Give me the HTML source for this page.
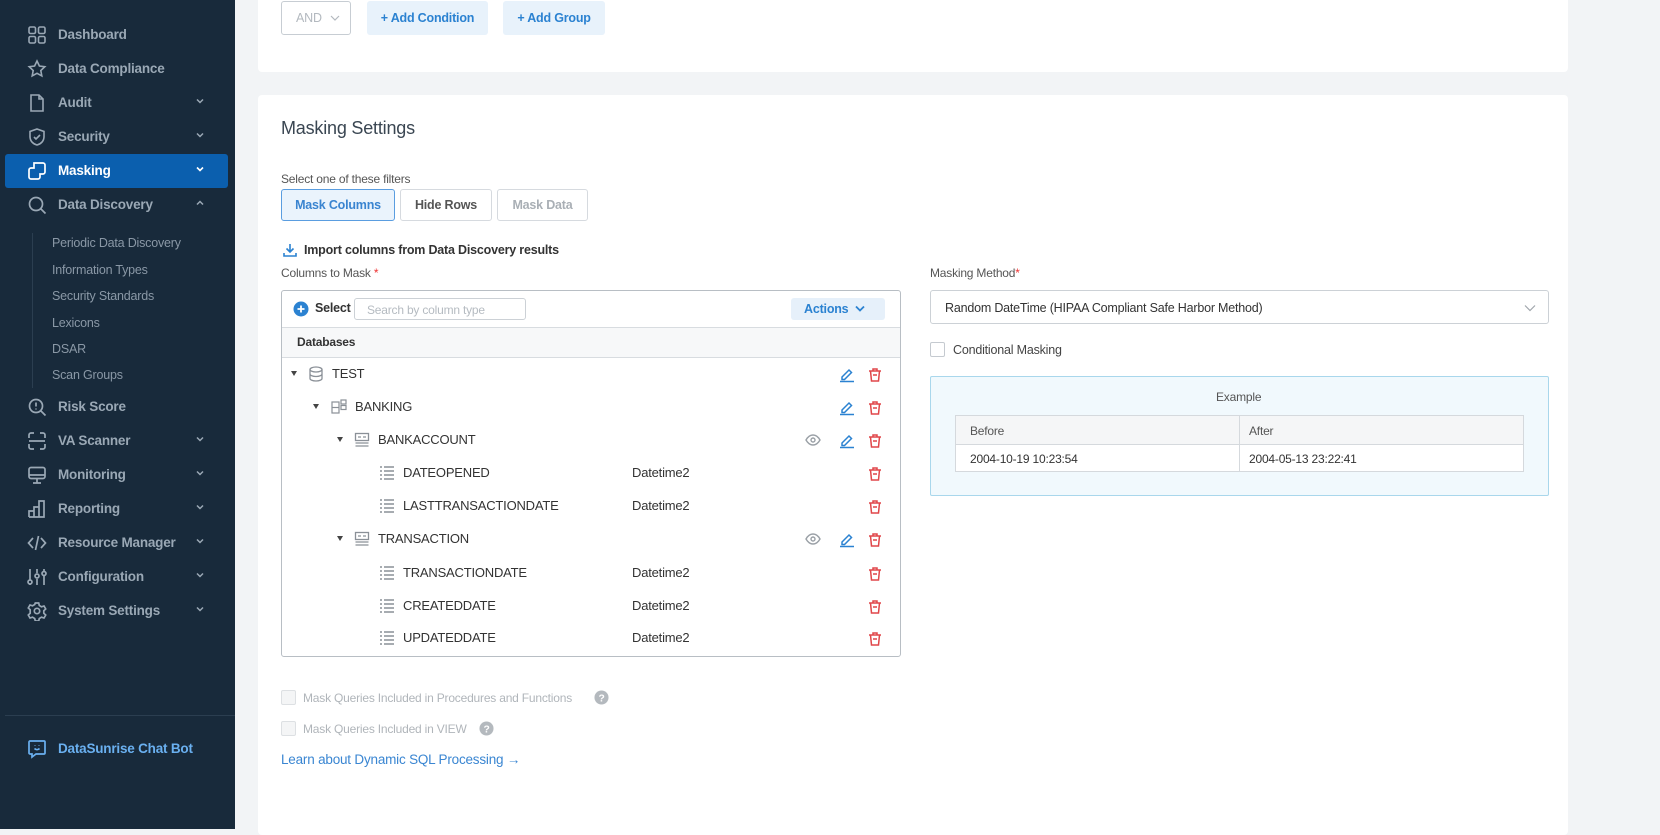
<!DOCTYPE html>
<html><head><meta charset="utf-8"><style>
*{box-sizing:border-box;margin:0;padding:0}
body{width:1660px;height:829px;overflow:hidden;background:#f2f4f6;font-family:"Liberation Sans",sans-serif;font-size:12.5px;letter-spacing:-0.2px;color:#333;position:relative}
.sb{position:absolute;left:0;top:0;width:235px;height:829px;background:#182a3b}
.it{position:absolute;left:0;width:235px;height:34px;color:#9aa8b5;font-weight:bold;font-size:13.5px}
.it .ic{position:absolute;left:27px;top:7px;width:20px;height:20px}
.it .t{position:absolute;left:58px;top:9px}
.it .ch{position:absolute;left:196px;top:11px;width:8px;height:8px}
.it.act{left:5px;width:223px;background:#0b5fae;border-radius:3px;color:#fff}
.it.act .ic{left:22px}.it.act .t{left:53px}.it.act .ch{left:191px}
.sub{position:absolute;left:52px;color:#8a98a6;font-size:12.5px}
.card{position:absolute;background:#fff;border-radius:4px}
.btn{position:absolute;border-radius:3px;font-weight:bold;font-size:12.5px;text-align:center}
.lbl{position:absolute;color:#555;font-size:12px}
.row{position:absolute;left:281px;width:619px;height:33px;font-size:13px;color:#333}
.row span{position:absolute;top:8px}
.tri{position:absolute;top:13px;width:0;height:0;border-left:3.5px solid transparent;border-right:3.5px solid transparent;border-top:5px solid #444}
.ri{position:absolute;top:8px;width:16px;height:16px}
</style></head><body>
<div class="sb">
 <div class="it" style="top:18px"><svg class="ic" viewBox="0 0 20 20" fill="none" stroke="#9aa8b5" stroke-width="1.6"><rect x="2" y="2" width="6.5" height="6.5" rx="1.5"/><rect x="11.5" y="2" width="6.5" height="6.5" rx="1.5"/><rect x="2" y="11.5" width="6.5" height="6.5" rx="1.5"/><rect x="11.5" y="11.5" width="6.5" height="6.5" rx="1.5"/></svg><span class="t">Dashboard</span></div>
 <div class="it" style="top:52px"><svg class="ic" viewBox="0 0 20 20" fill="none" stroke="#9aa8b5" stroke-width="1.6"><path d="M10 2l2.4 5 5.4.7-4 3.8 1 5.4L10 14.3 5.2 16.9l1-5.4-4-3.8 5.4-.7z"/></svg><span class="t">Data Compliance</span></div>
 <div class="it" style="top:86px"><svg class="ic" viewBox="0 0 20 20" fill="none" stroke="#9aa8b5" stroke-width="1.6"><path d="M4 2h8l4 4v12H4z"/><path d="M12 2v4h4"/></svg><span class="t">Audit</span><svg class="ch" viewBox="0 0 8 8"><path d="M1 2.5l3 3 3-3" stroke="#9aa8b5" stroke-width="1.5" fill="none"/></svg></div>
 <div class="it" style="top:120px"><svg class="ic" viewBox="0 0 20 20" fill="none" stroke="#9aa8b5" stroke-width="1.6"><path d="M10 2l7 2.5v5c0 4.5-3 7.5-7 8.5-4-1-7-4-7-8.5v-5z"/><path d="M7 10l2 2 4-4"/></svg><span class="t">Security</span><svg class="ch" viewBox="0 0 8 8"><path d="M1 2.5l3 3 3-3" stroke="#9aa8b5" stroke-width="1.5" fill="none"/></svg></div>
 <div class="it act" style="top:154px"><svg class="ic" viewBox="0 0 20 20" fill="none" stroke="#fff" stroke-width="1.7"><path d="M7 2h9a2 2 0 012 2v7a2 2 0 01-2 2h-3v3a2 2 0 01-2 2H4a2 2 0 01-2-2V9a2 2 0 012-2h3z"/></svg><span class="t">Masking</span><svg class="ch" viewBox="0 0 8 8"><path d="M1 2.5l3 3 3-3" stroke="#fff" stroke-width="1.6" fill="none"/></svg></div>
 <div class="it" style="top:188px"><svg class="ic" viewBox="0 0 20 20" fill="none" stroke="#9aa8b5" stroke-width="1.7"><circle cx="9" cy="9" r="6.5"/><path d="M14 14l4.5 4.5"/></svg><span class="t">Data Discovery</span><svg class="ch" viewBox="0 0 8 8"><path d="M1 5.5l3-3 3 3" stroke="#9aa8b5" stroke-width="1.5" fill="none"/></svg></div>
 <div style="position:absolute;left:32px;top:233px;width:1px;height:155px;background:#2b3e50"></div>
 <div class="sub" style="top:236px">Periodic Data Discovery</div>
 <div class="sub" style="top:263px">Information Types</div>
 <div class="sub" style="top:289px">Security Standards</div>
 <div class="sub" style="top:316px">Lexicons</div>
 <div class="sub" style="top:342px">DSAR</div>
 <div class="sub" style="top:368px">Scan Groups</div>
 <div class="it" style="top:390px"><svg class="ic" viewBox="0 0 20 20" fill="none" stroke="#9aa8b5" stroke-width="1.7"><circle cx="9" cy="9" r="6.5"/><path d="M14 14l4.5 4.5M9 5.5v4M9 11.5v1"/></svg><span class="t">Risk Score</span></div>
 <div class="it" style="top:424px"><svg class="ic" viewBox="0 0 20 20" fill="none" stroke="#9aa8b5" stroke-width="1.7"><path d="M2 7V4a2 2 0 012-2h3M13 2h3a2 2 0 012 2v3M18 13v3a2 2 0 01-2 2h-3M7 18H4a2 2 0 01-2-2v-3M2 10h16"/></svg><span class="t">VA Scanner</span><svg class="ch" viewBox="0 0 8 8"><path d="M1 2.5l3 3 3-3" stroke="#9aa8b5" stroke-width="1.5" fill="none"/></svg></div>
 <div class="it" style="top:458px"><svg class="ic" viewBox="0 0 20 20" fill="none" stroke="#9aa8b5" stroke-width="1.7"><rect x="2" y="2.5" width="16" height="11" rx="2"/><path d="M2 10h16M10 13.5v4M6 18h8"/></svg><span class="t">Monitoring</span><svg class="ch" viewBox="0 0 8 8"><path d="M1 2.5l3 3 3-3" stroke="#9aa8b5" stroke-width="1.5" fill="none"/></svg></div>
 <div class="it" style="top:492px"><svg class="ic" viewBox="0 0 20 20" fill="none" stroke="#9aa8b5" stroke-width="1.7"><path d="M2 18v-6h5v6M7 18V8h5v10M12 18V2h5v16H2"/></svg><span class="t">Reporting</span><svg class="ch" viewBox="0 0 8 8"><path d="M1 2.5l3 3 3-3" stroke="#9aa8b5" stroke-width="1.5" fill="none"/></svg></div>
 <div class="it" style="top:526px"><svg class="ic" viewBox="0 0 20 20" fill="none" stroke="#9aa8b5" stroke-width="1.7"><path d="M6 5L1.5 10 6 15M14 5l4.5 5-4.5 5M11.5 3l-3 14"/></svg><span class="t">Resource Manager</span><svg class="ch" viewBox="0 0 8 8"><path d="M1 2.5l3 3 3-3" stroke="#9aa8b5" stroke-width="1.5" fill="none"/></svg></div>
 <div class="it" style="top:560px"><svg class="ic" viewBox="0 0 20 20" fill="none" stroke="#9aa8b5" stroke-width="1.7"><path d="M3 2v11M10 2v4M17 2v2M3 17v1M10 12v6M17 9v9"/><circle cx="3" cy="15" r="2"/><circle cx="10" cy="9" r="2"/><circle cx="17" cy="6.5" r="2"/></svg><span class="t">Configuration</span><svg class="ch" viewBox="0 0 8 8"><path d="M1 2.5l3 3 3-3" stroke="#9aa8b5" stroke-width="1.5" fill="none"/></svg></div>
 <div class="it" style="top:594px"><svg class="ic" viewBox="0 0 20 20" fill="none" stroke="#9aa8b5" stroke-width="1.7"><path d="M8.3 2h3.4l.6 2.5 2.2 1.3 2.5-.8 1.7 3-1.9 1.8v2.4l1.9 1.8-1.7 3-2.5-.8-2.2 1.3-.6 2.5H8.3l-.6-2.5-2.2-1.3-2.5.8-1.7-3 1.9-1.8V8.8L1.3 7l1.7-3 2.5.8 2.2-1.3z"/><circle cx="10" cy="10" r="2.7"/></svg><span class="t">System Settings</span><svg class="ch" viewBox="0 0 8 8"><path d="M1 2.5l3 3 3-3" stroke="#9aa8b5" stroke-width="1.5" fill="none"/></svg></div>
 <div style="position:absolute;left:5px;top:715px;width:230px;height:1px;background:#2b3e50"></div>
 <div class="it" style="top:732px;color:#6ab0f0"><svg class="ic" viewBox="0 0 20 20" fill="none" stroke="#6ab0f0" stroke-width="1.7"><path d="M3 2h14a1 1 0 011 1v11a1 1 0 01-1 1H9l-4 3v-3H3a1 1 0 01-1-1V3a1 1 0 011-1z"/><path d="M7.5 9.5c1.5 1.5 3.5 1.5 5 0M8 6v.5M12 6v.5"/></svg><span class="t">DataSunrise Chat Bot</span></div>
</div>

<div class="card" style="left:258px;top:-5px;width:1310px;height:77px"></div>
<div class="btn" style="left:281px;top:1px;width:70px;height:34px;border:1px solid #c7cdd3;color:#b3b9bf;font-weight:normal;line-height:32px;text-align:left;padding-left:14px">AND <svg style="position:absolute;left:48px;top:12px" width="10" height="8" viewBox="0 0 10 8"><path d="M1 2l4 4 4-4" stroke="#b3b9bf" stroke-width="1.2" fill="none"/></svg></div>
<div class="btn" style="left:367px;top:1px;width:121px;height:34px;background:#e8f2fb;color:#2b82d1;line-height:34px">+ Add Condition</div>
<div class="btn" style="left:503px;top:1px;width:102px;height:34px;background:#e8f2fb;color:#2b82d1;line-height:34px">+ Add Group</div>

<div class="card" style="left:258px;top:95px;width:1310px;height:740px"></div>
<div style="position:absolute;left:281px;top:118px;font-size:18px;color:#3a4652">Masking Settings</div>
<div class="lbl" style="left:281px;top:172px">Select one of these filters</div>
<div class="btn" style="left:281px;top:189px;width:114px;height:32px;border:1px solid #5a9de0;background:#eaf3fc;color:#3a84d0;line-height:30px">Mask Columns</div>
<div class="btn" style="left:400px;top:189px;width:92px;height:32px;border:1px solid #d6dadf;color:#555;line-height:30px">Hide Rows</div>
<div class="btn" style="left:497px;top:189px;width:91px;height:32px;border:1px solid #d6dadf;color:#a9afb5;line-height:30px">Mask Data</div>
<svg style="position:absolute;left:283px;top:243px" width="14" height="14" viewBox="0 0 14 14" fill="none" stroke="#2b82d1" stroke-width="1.6"><path d="M7 1v8M3.5 5.5L7 9l3.5-3.5M1 10v3h12v-3"/></svg>
<div style="position:absolute;left:304px;top:243px;font-weight:bold;color:#333">Import columns from Data Discovery results</div>
<div class="lbl" style="left:281px;top:266px">Columns to Mask <span style="color:#e33">*</span></div>

<div style="position:absolute;left:281px;top:290px;width:620px;height:367px;border:1px solid #b8bec4;border-radius:3px"></div>
<svg style="position:absolute;left:293px;top:301px" width="16" height="16" viewBox="0 0 16 16"><circle cx="8" cy="8" r="7.5" fill="#2b82d1"/><path d="M8 4.5v7M4.5 8h7" stroke="#fff" stroke-width="1.8"/></svg>
<div style="position:absolute;left:315px;top:301px;font-weight:bold;color:#333">Select</div>
<div style="position:absolute;left:354px;top:298px;width:172px;height:22px;border:1px solid #ccd1d6;border-radius:3px;color:#b5bbc1;font-size:12px;padding:4px 0 0 12px">Search by column type</div>
<div style="position:absolute;left:791px;top:298px;width:94px;height:22px;background:#e6f0fa;border-radius:3px;color:#2b82d1;font-weight:bold;font-size:12.5px;padding:4px 0 0 13px">Actions <svg style="position:absolute;left:64px;top:7px" width="10" height="8" viewBox="0 0 10 8"><path d="M1 1.5l4 4 4-4" stroke="#2b82d1" stroke-width="1.8" fill="none"/></svg></div>
<div style="position:absolute;left:282px;top:327px;width:618px;height:31px;background:#f7f8f9;border-top:1px solid #d8dce0;border-bottom:1px solid #d8dce0"></div>
<div style="position:absolute;left:297px;top:335px;font-weight:bold;font-size:12px;color:#333">Databases</div>

<div class="row" style="top:358px"><i class="tri" style="left:10px"></i><svg class="ri" style="left:27px" viewBox="0 0 16 16" fill="none" stroke="#8a9097" stroke-width="1.3"><ellipse cx="8" cy="3.5" rx="6" ry="2.5"/><path d="M2 3.5v9c0 1.4 2.7 2.5 6 2.5s6-1.1 6-2.5v-9M2 8c0 1.4 2.7 2.5 6 2.5s6-1.1 6-2.5"/></svg><span style="left:51px">TEST</span></div>
<div class="row" style="top:391px"><i class="tri" style="left:32px"></i><svg class="ri" style="left:50px" viewBox="0 0 16 16" fill="none" stroke="#8a9097" stroke-width="1.2"><rect x="1" y="3" width="7" height="11"/><rect x="10" y="1" width="5" height="4"/><rect x="10" y="6.5" width="5" height="4"/><path d="M1 8.5h7"/></svg><span style="left:74px">BANKING</span></div>
<div class="row" style="top:424px"><i class="tri" style="left:56px"></i><svg class="ri" style="left:73px" viewBox="0 0 16 16" fill="none" stroke="#8a9097" stroke-width="1.3"><rect x="1.5" y="1.5" width="13" height="7"/><path d="M4 5h3M9 5h3M1.5 11h13M1.5 14h13"/></svg><span style="left:97px">BANKACCOUNT</span></div>
<div class="row" style="top:457px"><svg class="ri" style="left:98px" viewBox="0 0 16 16" fill="none" stroke="#8a9097" stroke-width="1.4"><path d="M1 2h2M1 6h2M1 10h2M1 14h2M5 2h10M5 6h10M5 10h10M5 14h10"/></svg><span style="left:122px">DATEOPENED</span><span style="left:351px">Datetime2</span></div>
<div class="row" style="top:490px"><svg class="ri" style="left:98px" viewBox="0 0 16 16" fill="none" stroke="#8a9097" stroke-width="1.4"><path d="M1 2h2M1 6h2M1 10h2M1 14h2M5 2h10M5 6h10M5 10h10M5 14h10"/></svg><span style="left:122px">LASTTRANSACTIONDATE</span><span style="left:351px">Datetime2</span></div>
<div class="row" style="top:523px"><i class="tri" style="left:56px"></i><svg class="ri" style="left:73px" viewBox="0 0 16 16" fill="none" stroke="#8a9097" stroke-width="1.3"><rect x="1.5" y="1.5" width="13" height="7"/><path d="M4 5h3M9 5h3M1.5 11h13M1.5 14h13"/></svg><span style="left:97px">TRANSACTION</span></div>
<div class="row" style="top:557px"><svg class="ri" style="left:98px" viewBox="0 0 16 16" fill="none" stroke="#8a9097" stroke-width="1.4"><path d="M1 2h2M1 6h2M1 10h2M1 14h2M5 2h10M5 6h10M5 10h10M5 14h10"/></svg><span style="left:122px">TRANSACTIONDATE</span><span style="left:351px">Datetime2</span></div>
<div class="row" style="top:590px"><svg class="ri" style="left:98px" viewBox="0 0 16 16" fill="none" stroke="#8a9097" stroke-width="1.4"><path d="M1 2h2M1 6h2M1 10h2M1 14h2M5 2h10M5 6h10M5 10h10M5 14h10"/></svg><span style="left:122px">CREATEDDATE</span><span style="left:351px">Datetime2</span></div>
<div class="row" style="top:622px"><svg class="ri" style="left:98px" viewBox="0 0 16 16" fill="none" stroke="#8a9097" stroke-width="1.4"><path d="M1 2h2M1 6h2M1 10h2M1 14h2M5 2h10M5 6h10M5 10h10M5 14h10"/></svg><span style="left:122px">UPDATEDDATE</span><span style="left:351px">Datetime2</span></div>

<svg width="0" height="0" style="position:absolute"><defs>
<g id="ed" fill="none" stroke="#2b82d1" stroke-width="1.5"><path d="M3 11l7-7 2.5 2.5-7 7H3z"/><path d="M1 15.5h14"/></g>
<g id="tr" fill="none" stroke="#e0474a" stroke-width="1.5"><path d="M2 4h12M6 4V2h4v2M3.5 4l1 10h7l1-10M6 8h4"/></g>
<g id="ey" fill="none" stroke="#9aa0a6" stroke-width="1.4"><path d="M1 8c2-3.5 4.5-5 7-5s5 1.5 7 5c-2 3.5-4.5 5-7 5s-5-1.5-7-5z"/><circle cx="8" cy="8" r="2"/></g>
</defs></svg>
<svg style="position:absolute;left:839px;top:366px" width="16" height="17"><use href="#ed"/></svg>
<svg style="position:absolute;left:839px;top:399px" width="16" height="17"><use href="#ed"/></svg>
<svg style="position:absolute;left:839px;top:432px" width="16" height="17"><use href="#ed"/></svg>
<svg style="position:absolute;left:839px;top:531px" width="16" height="17"><use href="#ed"/></svg>
<svg style="position:absolute;left:805px;top:432px" width="16" height="16"><use href="#ey"/></svg>
<svg style="position:absolute;left:805px;top:531px" width="16" height="16"><use href="#ey"/></svg>
<svg style="position:absolute;left:867px;top:367px" width="16" height="16"><use href="#tr"/></svg>
<svg style="position:absolute;left:867px;top:400px" width="16" height="16"><use href="#tr"/></svg>
<svg style="position:absolute;left:867px;top:433px" width="16" height="16"><use href="#tr"/></svg>
<svg style="position:absolute;left:867px;top:466px" width="16" height="16"><use href="#tr"/></svg>
<svg style="position:absolute;left:867px;top:499px" width="16" height="16"><use href="#tr"/></svg>
<svg style="position:absolute;left:867px;top:532px" width="16" height="16"><use href="#tr"/></svg>
<svg style="position:absolute;left:867px;top:566px" width="16" height="16"><use href="#tr"/></svg>
<svg style="position:absolute;left:867px;top:599px" width="16" height="16"><use href="#tr"/></svg>
<svg style="position:absolute;left:867px;top:631px" width="16" height="16"><use href="#tr"/></svg>

<div class="lbl" style="left:930px;top:266px">Masking Method<span style="color:#e33">*</span></div>
<div style="position:absolute;left:930px;top:290px;width:619px;height:34px;border:1px solid #ccd1d6;border-radius:3px;padding:10px 0 0 14px;color:#333">Random DateTime (HIPAA Compliant Safe Harbor Method)<svg style="position:absolute;left:593px;top:13px" width="12" height="8" viewBox="0 0 12 8"><path d="M1 1.5l5 5 5-5" stroke="#a0a6ac" stroke-width="1.2" fill="none"/></svg></div>
<div style="position:absolute;left:930px;top:342px;width:15px;height:15px;border:1px solid #c5cad0;border-radius:2px"></div>
<div style="position:absolute;left:953px;top:343px;color:#444">Conditional Masking</div>
<div style="position:absolute;left:930px;top:376px;width:619px;height:120px;background:#f1f9fd;border:1px solid #a9d7ec;border-radius:2px"></div>
<div style="position:absolute;left:1216px;top:390px;color:#555;font-size:12px">Example</div>
<div style="position:absolute;left:955px;top:415px;width:569px;height:57px;border:1px solid #d5d9dd;background:#fff"></div>
<div style="position:absolute;left:956px;top:416px;width:567px;height:29px;background:#f5f6f7;border-bottom:1px solid #d5d9dd"></div>
<div style="position:absolute;left:1239px;top:416px;width:1px;height:55px;background:#d5d9dd"></div>
<div style="position:absolute;left:970px;top:424px;color:#555;font-size:12px">Before</div>
<div style="position:absolute;left:1249px;top:424px;color:#555;font-size:12px">After</div>
<div style="position:absolute;left:970px;top:452px;color:#333;font-size:12px">2004-10-19 10:23:54</div>
<div style="position:absolute;left:1249px;top:452px;color:#333;font-size:12px">2004-05-13 23:22:41</div>

<div style="position:absolute;left:281px;top:690px;width:15px;height:15px;border:1px solid #dde0e3;background:#f4f5f6;border-radius:2px"></div>
<div style="position:absolute;left:303px;top:691px;color:#b0b5ba;font-size:12px">Mask Queries Included in Procedures and Functions</div>
<svg style="position:absolute;left:594px;top:690px" width="15" height="15" viewBox="0 0 16 16"><circle cx="8" cy="8" r="7.5" fill="#b4b9be"/><text x="8" y="12" font-size="11" font-weight="bold" text-anchor="middle" fill="#fff" font-family="Liberation Sans">?</text></svg>
<div style="position:absolute;left:281px;top:721px;width:15px;height:15px;border:1px solid #dde0e3;background:#f4f5f6;border-radius:2px"></div>
<div style="position:absolute;left:303px;top:722px;color:#b0b5ba;font-size:12px">Mask Queries Included in VIEW</div>
<svg style="position:absolute;left:479px;top:721px" width="15" height="15" viewBox="0 0 16 16"><circle cx="8" cy="8" r="7.5" fill="#b4b9be"/><text x="8" y="12" font-size="11" font-weight="bold" text-anchor="middle" fill="#fff" font-family="Liberation Sans">?</text></svg>
<div style="position:absolute;left:281px;top:752px;color:#3a86d2;font-size:13.5px">Learn about Dynamic SQL Processing →</div>
</body></html>
